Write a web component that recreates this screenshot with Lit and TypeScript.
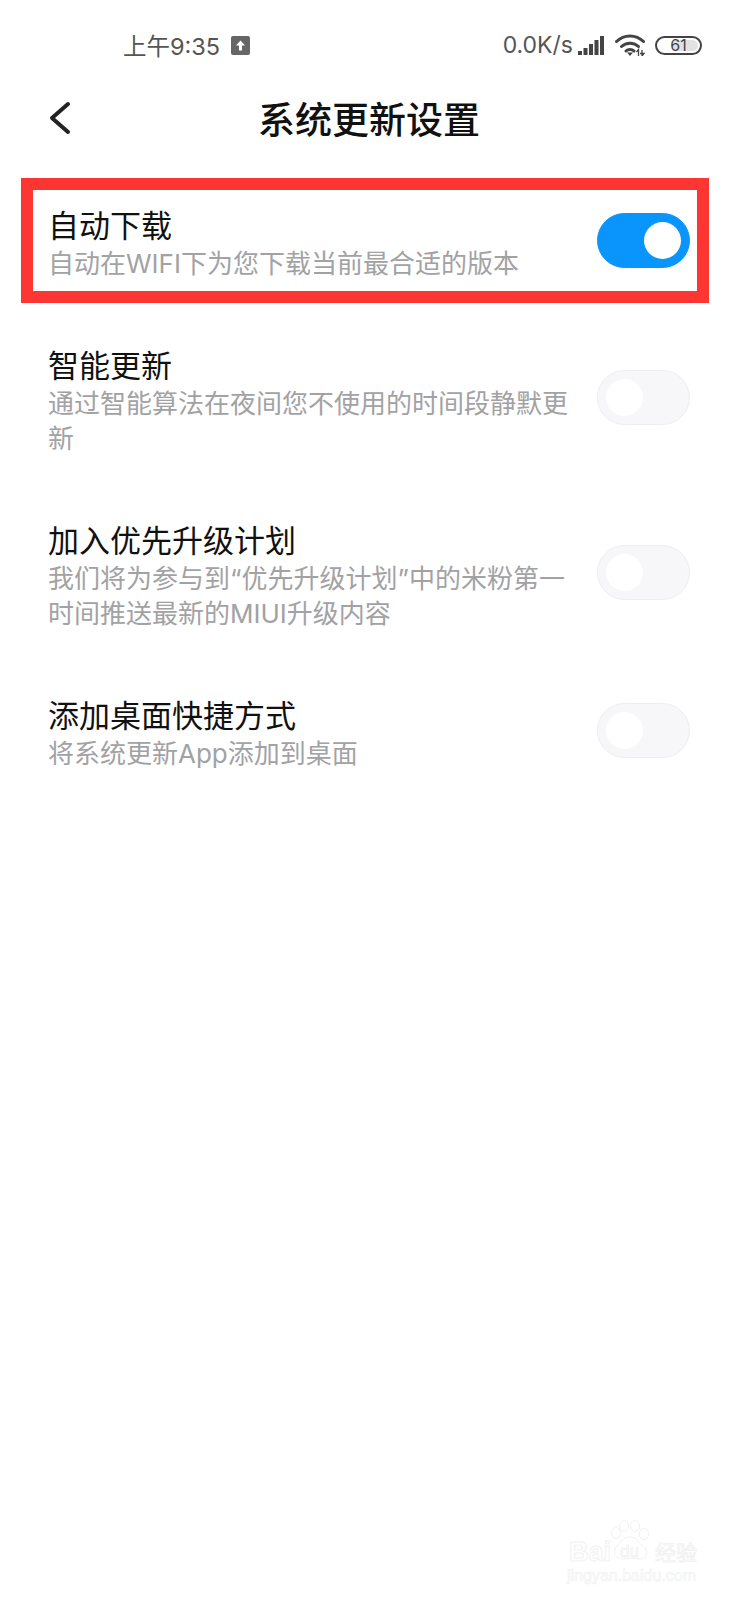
import { LitElement, html, css, svg } from 'lit';
import { customElement } from 'lit/decorators.js';

interface Setting {
  title: string;
  desc: string;
  on?: boolean;
  marked?: boolean;
}

const settings: Setting[] = [
  { title: '自动下载', desc: '自动在WIFI下为您下载当前最合适的版本', on: true, marked: true },
  { title: '智能更新', desc: '通过智能算法在夜间您不使用的时间段静默更新' },
  { title: '加入优先升级计划', desc: '我们将为参与到“优先升级计划”中的米粉第一时间推送最新的MIUI升级内容' },
  { title: '添加桌面快捷方式', desc: '将系统更新App添加到桌面' },
];

const signalIcon = svg`
  <rect x="0" y="15" width="4" height="4" />
  <rect x="5.5" y="12" width="4" height="7" />
  <rect x="11" y="8" width="4" height="11" />
  <rect x="16.5" y="4" width="4" height="15" />
  <rect x="22" y="0" width="4" height="19" />
`;

const wifiIcon = svg`
  <g fill="none" stroke="#444" stroke-width="3" stroke-linecap="round">
    <path d="M1.5 7.5C9 0 21 0 28.5 7.5" />
    <path d="M6.5 12.5C11 8 19 8 23.5 12.5" />
    <path d="M11 17C13 15 17 15 19 17" />
  </g>
  <path d="M12 18.5h6L15 22z" fill="#444" />
  <path d="M23.5 22v-6M21.5 18l2-2.5v6M27 16v6M27 22l2-2.5h-4" fill="none" stroke="#444" stroke-width="1.3" />
`;

@customElement('app-root')
export class AppRoot extends LitElement {
  static styles = css`
    :host {
      display: block;
      position: relative;
      width: 738px;
      height: 1600px;
      overflow: hidden;
      background: #fff;
      font-family: Inter, 'Noto Sans CJK SC', sans-serif;
    }

    .status {
      display: flex;
      align-items: center;
      height: 90px;
      padding: 0 36px 0 123px;
      box-sizing: border-box;
      color: #555;
    }

    .time {
      font-size: 23.5px;
    }

    .upload {
      width: 19px;
      height: 19px;
      margin-left: 11px;
      fill: #666;
    }

    .right {
      display: flex;
      align-items: center;
      margin-left: auto;
    }

    .speed {
      font-size: 23px;
    }

    .signal {
      width: 26px;
      height: 19px;
      margin-left: 5px;
      fill: #444;
    }

    .wifi {
      width: 30px;
      height: 22px;
      margin-left: 11px;
    }

    .battery {
      position: relative;
      width: 47px;
      height: 19px;
      margin-left: 10px;
      box-sizing: border-box;
      border: 2px solid #444;
      border-radius: 10px;
      font-size: 16px;
      line-height: 15px;
      text-align: center;
      color: #444;
    }

    .battery-fill {
      position: absolute;
      top: 2px;
      bottom: 2px;
      right: 2px;
      width: 61%;
      border-radius: 6px;
      background: #e2e2e4;
    }

    .battery-level {
      position: relative;
    }

    .nav {
      position: relative;
      display: flex;
      align-items: center;
      justify-content: center;
      height: 56px;
    }

    .back {
      position: absolute;
      left: 48px;
      top: 10px;
      width: 24px;
      height: 36px;
    }

    .heading {
      font-size: 37px;
      font-weight: 500;
      color: #111;
    }

    .list {
      display: flex;
      flex-direction: column;
      gap: 64px;
      padding: 59px 48px 0 48px;
    }

    .row {
      position: relative;
      display: flex;
      align-items: center;
      justify-content: space-between;
    }

    .text {
      width: 530px;
    }

    .title {
      font-size: 31px;
      line-height: 41px;
      color: #111;
    }

    .desc {
      font-size: 26px;
      line-height: 35px;
      color: #a2a2a4;
    }

    .toggle {
      position: relative;
      flex: none;
      width: 93px;
      height: 55px;
      margin-bottom: 6px;
      box-sizing: border-box;
      border: 1px solid #eeeef0;
      border-radius: 28px;
      background: #f7f7f9;
    }

    .knob {
      position: absolute;
      top: 8px;
      left: 8px;
      width: 37px;
      height: 37px;
      border-radius: 50%;
      background: #fff;
    }

    .toggle.on {
      border-color: #0a95fd;
      background: #0a95fd;
    }

    .toggle.on .knob {
      left: 46px;
    }

    .mark {
      position: absolute;
      top: -27px;
      bottom: -22px;
      left: -27px;
      right: -19px;
      border: 12px solid #fd3533;
      pointer-events: none;
    }

    .watermark {
      position: absolute;
      left: 566px;
      top: 1516px;
      width: 136px;
      height: 70px;
      color: transparent;
      font-family: 'Liberation Sans', 'Noto Sans CJK SC', sans-serif;
    }

    .paw {
      position: absolute;
      left: 44px;
      top: 4px;
      width: 40px;
      height: 40px;
      fill: none;
      stroke: #f2f2f2;
      stroke-width: 1;
    }

    .wm-brand {
      position: absolute;
      left: 3px;
      top: 21px;
      font-size: 27px;
      line-height: 30px;
      font-weight: 700;
      -webkit-text-stroke: 1px #f2f2f2;
    }

    .wm-du {
      position: absolute;
      left: 54px;
      top: 27px;
      font-size: 17px;
      line-height: 18px;
      -webkit-text-stroke: 1px #f2f2f2;
    }

    .wm-cn {
      position: absolute;
      left: 89px;
      top: 23px;
      font-size: 21px;
      line-height: 28px;
      -webkit-text-stroke: 1px #f2f2f2;
    }

    .wm-url {
      position: absolute;
      left: 1px;
      top: 51px;
      font-size: 16px;
      line-height: 18px;
      white-space: nowrap;
      -webkit-text-stroke: 0.7px #f2f2f2;
    }
  `;

  render() {
    return html`
      <div class="status">
        <span class="time">上午9:35</span>
        <svg class="upload" viewBox="0 0 19 19">
          <rect width="19" height="19" rx="2" />
          <path d="M9.5 4.5 5 9.5h3v5h3v-5h3z" fill="#fff" />
        </svg>
        <div class="right">
          <span class="speed">0.0K/s</span>
          <svg class="signal" viewBox="0 0 26 19">${signalIcon}</svg>
          <svg class="wifi" viewBox="0 0 30 22">${wifiIcon}</svg>
          <div class="battery">
            <div class="battery-fill"></div>
            <span class="battery-level">61</span>
          </div>
        </div>
      </div>

      <div class="nav">
        <svg class="back" viewBox="0 0 24 36">
          <path d="M20 4 4 18l16 14" fill="none" stroke="#222" stroke-width="4" stroke-linecap="round" stroke-linejoin="round" />
        </svg>
        <span class="heading">系统更新设置</span>
      </div>

      <div class="list">
        ${settings.map(
          (item) => html`
            <div class="row">
              <div class="text">
                <div class="title">${item.title}</div>
                <div class="desc">${item.desc}</div>
              </div>
              <div class="toggle ${item.on ? 'on' : ''}"><div class="knob"></div></div>
              ${item.marked ? html`<div class="mark"></div>` : ''}
            </div>
          `
        )}
      </div>

      <div class="watermark">
        <svg class="paw" viewBox="0 0 40 40">
          <ellipse cx="6" cy="13" rx="4.5" ry="5.5" />
          <ellipse cx="14" cy="6" rx="4.5" ry="5.5" />
          <ellipse cx="25" cy="6" rx="4.5" ry="5.5" />
          <ellipse cx="34" cy="14" rx="4.5" ry="5.5" />
          <path d="M20 17C13 17 12 22 8 25 2 29 4 39 12 39 16 39 18 38 21 38 25 38 27 39 30 39 38 39 39 30 33 26 28 23 27 17 20 17Z" />
        </svg>
        <span class="wm-brand">Bai</span>
        <span class="wm-du">du</span>
        <span class="wm-cn">经验</span>
        <span class="wm-url">jingyan.baidu.com</span>
      </div>
    `;
  }
}
